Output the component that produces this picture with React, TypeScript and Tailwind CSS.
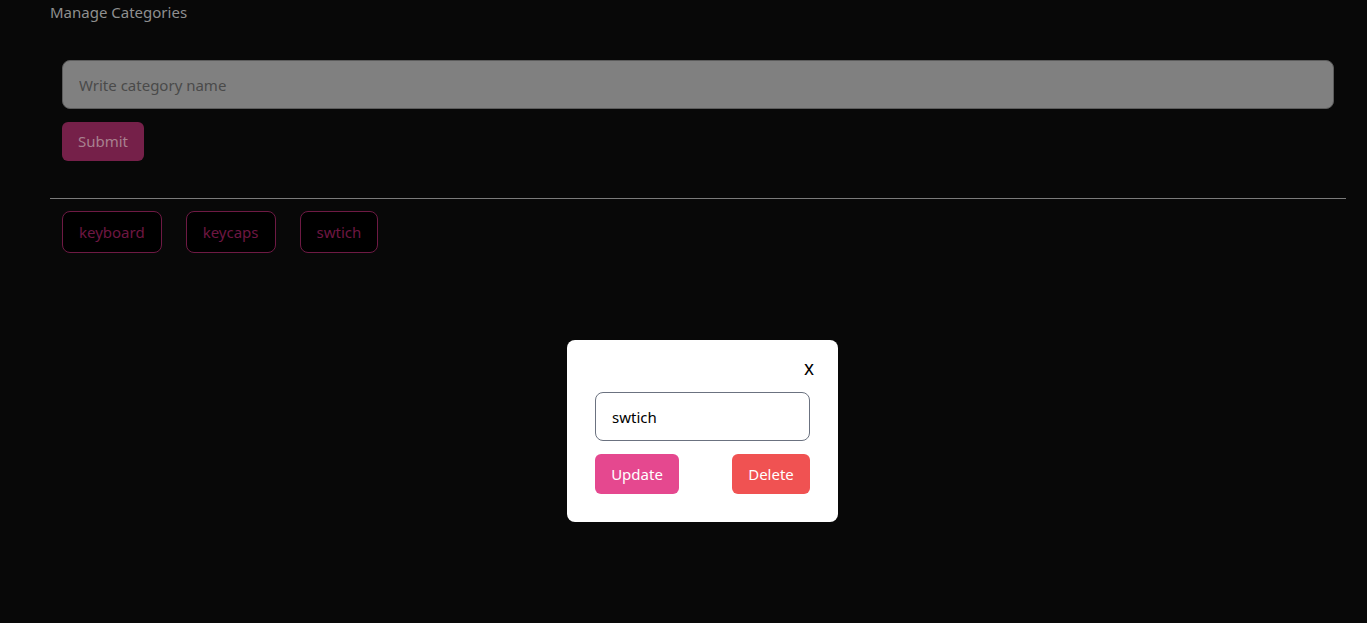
export default function App() {
  const tags = ["keyboard", "keycaps", "swtich"];

  return (
    <div
      className="relative min-h-[623px] w-full bg-[#080808] text-[#9a9a9a]"
      style={{ fontFamily: '"Noto Sans", "Open Sans", sans-serif' }}
    >
      <div className="pl-[50px] pr-[21px] pt-[2px]">
        <h1 className="text-[15px] leading-[20px] text-[#8f8f8f]">Manage Categories</h1>

        <div className="px-3 pt-[38px]">
          <input
            placeholder="Write category name"
            className="block h-[49px] w-full rounded-lg border border-[#5c5c5c] bg-[#808080] px-4 text-[15px] text-[#333] placeholder:text-[#4a4a4a] outline-none"
          />
          <button className="mt-[13px] h-[39px] w-[82px] rounded-md bg-[#752049] text-[15px] text-[#a8808f]">
            Submit
          </button>
        </div>

        <hr className="mt-[37px] border-t border-[#7a7a7a]" />

        <div className="flex gap-6 px-3 pt-3">
          {tags.map((t) => (
            <button
              key={t}
              className="h-[42px] rounded-lg border border-[#6e1a44] bg-black px-4 text-[15px] text-[#6e1742]"
            >
              {t}
            </button>
          ))}
        </div>
      </div>

      {/* modal */}
      <div className="absolute left-[567px] top-[340px] w-[271px] rounded-lg bg-white px-7 pb-7 pt-[17px]">
        <div className="-mr-[4px] flex justify-end">
          <button className="text-[19px] leading-[22px] text-black">x</button>
        </div>
        <input
          defaultValue="swtich"
          className="mt-[13px] block h-[49px] w-full rounded-lg border border-[#6b7280] px-4 text-[15px] text-black outline-none"
        />
        <div className="mt-[13px] flex justify-between">
          <button className="h-[40px] w-[84px] rounded-md bg-[#e5488f] text-[15px] text-white">
            Update
          </button>
          <button className="h-[40px] w-[78px] rounded-md bg-[#f05252] text-[15px] text-white">
            Delete
          </button>
        </div>
      </div>
    </div>
  );
}
